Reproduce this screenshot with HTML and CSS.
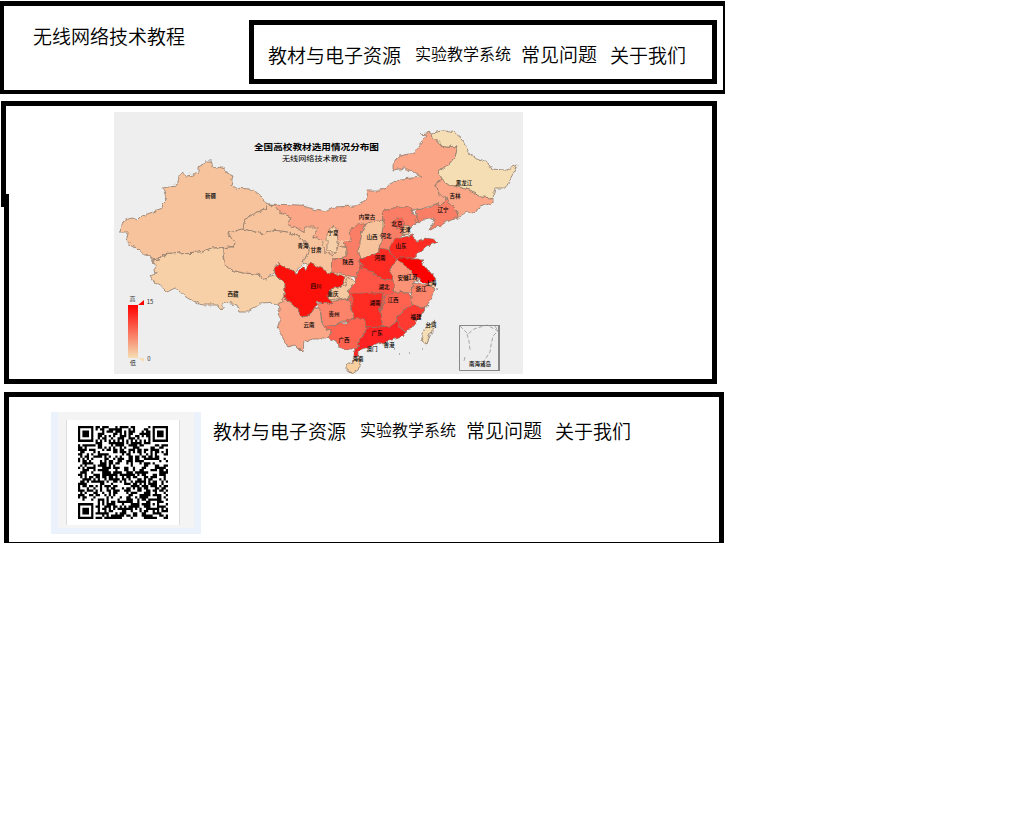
FILE: index.html
```html
<!DOCTYPE html>
<html lang="zh-CN">
<head>
<meta charset="utf-8">
<title>无线网络技术教程</title>
<link rel="stylesheet" href="styles.css">
</head>
<body>
<header class="header">
  <h1 class="brand">无线网络技术教程</h1>
  <nav class="links nav">
    <a class="link resources">教材与电子资源</a>
    <a class="link lab">实验教学系统</a>
    <a class="link faq">常见问题</a>
    <a class="link about">关于我们</a>
  </nav>
</header>
<main class="map-panel">
  <div class="left-edge"></div>
  <svg class="map" viewBox="114 112 409 262" width="409" height="262">
    <defs>
      <filter id="coast" x="-5%" y="-5%" width="110%" height="110%" color-interpolation-filters="sRGB">
        <feTurbulence type="fractalNoise" baseFrequency=".16" numOctaves="2" seed="4" result="n"/>
        <feDisplacementMap in="SourceGraphic" in2="n" scale="6" xChannelSelector="R" yChannelSelector="G"/>
      </filter>
      <linearGradient id="scale" x2="0" y2="1"><stop stop-color="#f00"/><stop offset="1" stop-color="#f5deb3"/></linearGradient>
    </defs>
    <rect x="114" y="112" width="409" height="262" fill="#eee"/>
    <g class="provinces" filter="url(#coast)">
      <path fill="#fba687" d="M267 204 300 205 313 209 323 212 333 207 355 206 367 198 365 190 380 190 400 179 422 177 415 173 405 168 393 170 393 165 399 156 415 153 417 147 427 135 422 134 432 132 433 137 440 145 458 147 455 157 450 163 438 172 443 180 435 183 437 192 443 195 447 202 417 210 412 212 408 207 387 210 382 213 383 220 365 225 350 228 347 240 337 243 322 240 280 230Z"/>
      <g stroke="none"><path fill="#fba687" d="M300 215 360 215 355 238 335 248 312 243Z"/><path fill="#f7c39c" d="M313 243 333 240 347 240 352 262 352 300 330 303 305 265Z"/><path fill="#ff5546" d="M350 285 405 285 400 325 368 330 345 325 345 300Z"/></g>
      <path fill="#f7c39c" d="M119 227 122 222 132 218 137 221 142 216 150 213 162 209 163 203 166 200 164 192 162 188 177 186 177 180 181 173 185 176 193 175 198 173 198 167 205 164 206 161 211 161 213 166 225 169 227 173 233 176 231 185 235 188 250 189 260 194 267 204 265 210 257 212 245 219 243 229 228 233 234 242 232 247 212 248 200 252 180 253 163 255 160 260 153 261 149 255 140 252 135 247 126 242 128 232 121 232Z"/>
      <path fill="#f7d0a8" d="M153 261 160 260 163 255 180 253 200 252 212 248 223 248 223 257 224 263 232 270 243 273 257 274 265 279 278 274 285 280 285 298 280 303 260 304 248 312 240 312 237 305 225 303 220 309 218 305 203 305 190 300 175 288 169 291 155 283 151 275 156 273Z"/>
      <path fill="#f7c39c" d="M267 204 275 205 280 213 292 217 288 223 303 232 305 227 318 227 313 237 322 240 325 252 333 255 340 245 347 248 347 257 333 258 332 272 322 275 315 266 303 263 308 252 307 245 300 237 287 232 272 230 263 234 243 229 245 219 257 212 265 210Z"/>
      <path fill="#f7c39c" d="M228 233 243 229 263 234 272 230 287 232 300 237 307 245 308 252 303 263 295 272 287 270 280 264 275 265 276 272 265 279 257 274 243 273 232 270 224 263 223 248 232 247 234 242Z"/>
      <path fill="#f5deb3" d="M432 132 442 130 455 133 463 140 470 155 488 162 493 170 503 171 518 165 505 188 495 188 493 198 480 197 470 190 450 185 443 180 438 172 450 163 455 157 458 147 440 145 433 137Z"/>
      <path fill="#fba687" d="M443 180 450 185 470 190 480 197 493 198 493 202 477 207 475 213 467 212 458 217 455 207 447 200 437 192 435 183Z"/>
      <path fill="#fa7d66" d="M447 200 455 207 458 217 447 222 428 231 435 220 427 217 420 223 415 220 417 210 430 208ZM383 220 382 213 387 210 408 207 412 212 420 221 412 227 403 235 392 245 390 250 380 250 382 233ZM365 223 350 228 351 240 343 243 347 248 347 257 333 258 332 272 355 277 365 268 358 255 362 233Z"/>
      <path fill="#ff6350" d="M392 222 399 217 405 222 402 229 393 227Z"/>
      <path fill="#f7c39c" d="M365 223 383 220 383 227 380 248 378 253 360 260 358 253 362 233ZM403 225 408 227 410 233 403 234ZM430 281 436 284 433 287 428 285Z"/>
      <path fill="#f5d0a8" d="M327 233 333 226 337 231 338 242 335 253 327 250Z"/>
      <path fill="#ff2c24" d="M390 248 393 240 412 235 417 242 425 239 438 241 425 248 412 258 398 260 392 255ZM360 260 378 253 380 248 390 250 392 255 398 260 390 268 393 280 383 279 362 270Z"/>
      <path fill="#f00" d="M398 258 412 258 420 258 430 272 436 279 428 285 418 280 410 270 400 263Z"/>
      <path fill="#fc9377" d="M398 260 410 270 418 280 413 283 412 293 395 292 392 280 390 268Z"/>
      <path fill="#fb846a" d="M413 283 428 285 435 288 432 298 425 308 413 305 408 297 412 293Z"/>
      <path fill="#ff3a30" d="M413 305 425 308 423 314 412 328 405 332 395 323 398 315Z"/>
      <path fill="#ff5546" d="M355 277 362 268 383 279 393 280 395 292 385 297 352 293 345 290 355 283Z"/>
      <path fill="#ff6350" d="M385 296 395 292 408 293 413 305 398 315 395 323 390 328 383 327 380 313Z"/>
      <path fill="#ff2c24" d="M352 293 383 293 380 313 383 327 367 328 363 320 353 320 352 310Z"/>
      <path fill="#ff2222" d="M367 328 390 326 395 323 405 332 402 337 385 342 368 347 359 350 359 357 354 357 355 349 360 340Z"/>
      <path fill="#ff6350" d="M323 327 350 322 358 317 364 320 368 328 360 340 355 349 347 349 338 347 337 342 328 337 332 332Z"/>
      <path fill="#fb846a" d="M320 310 317 304 332 302 348 298 352 308 354 318 338 324 323 327Z"/>
      <path fill="#fba687" d="M285 298 295 307 303 317 310 315 315 307 320 310 322 326 332 332 325 339 312 339 303 342 302 352 295 345 287 347 283 337 277 328 280 318 278 303Z"/>
      <path fill="#f7c9a0" d="M328 290 345 285 348 277 357 283 347 291 350 298 337 300 328 299Z"/>
      <path fill="#ff110b" d="M274 268 280 263 290 271 297 273 302 267 306 271 310 263 320 268 330 273 345 277 342 286 328 290 328 298 333 305 318 302 310 315 303 317 295 307 285 298 285 283 275 273Z"/>
      <path fill="#f8cf9f" d="M347 365 355 359 361 361 358 369 352 373 347 370Z"/>
      <path fill="#f5deb3" d="M434 322 432 330 427 345 421 340 425 328Z"/>
    </g>
    <path d="M394 349h1m4 5h1m22-5h1m13-60h2m-36-56h1m7 120h-1" stroke="#777"/>
    <g class="labels">
      <text x="210.5" y="198">新疆</text><text x="233" y="295.500">西藏</text>
      <text x="303" y="248">青海</text><text x="316" y="251.500">甘肃</text><text x="333" y="235">宁夏</text>
      <text x="367" y="219">内蒙古</text><text x="348" y="264">陕西</text><text x="372" y="239">山西</text>
      <text x="386" y="238">河北</text><text x="397" y="226">北京</text><text x="405" y="232">天津</text>
      <text x="443" y="212">辽宁</text><text x="455" y="198">吉林</text><text x="464" y="185">黑龙江</text>
      <text x="401" y="248">山东</text><text x="380" y="260">河南</text><text x="403" y="280">安徽</text>
      <text x="412" y="279">江苏</text><text x="431" y="285">上海</text><text x="421" y="291">浙江</text>
      <text x="384" y="289">湖北</text><text x="375" y="305">湖南</text><text x="393" y="302">江西</text>
      <text x="416" y="319">福建</text><text x="377" y="335">广东</text><text x="344" y="342">广西</text>
      <text x="334" y="316">贵州</text><text x="309" y="327">云南</text><text x="316" y="288">四川</text>
      <text x="333" y="296">重庆</text><text x="358" y="361">海南</text><text x="372" y="351">澳门</text>
      <text x="389" y="347">香港</text><text x="431" y="327">台湾</text><text x="480" y="366">南海诸岛</text>
    </g>
    <text class="map-title" x="316.500" y="149.500" textLength="125" lengthAdjust="spacingAndGlyphs">全国高校教材选用情况分布图</text>
    <text class="map-subtitle" x="314.500" y="160.500" textLength="65" lengthAdjust="spacingAndGlyphs">无线网络技术教程</text>
    <rect x="128" y="305" width="10" height="53" fill="url(#scale)"/>
    <path d="M138 305 144 300V305Z" fill="#f00"/><path d="M138 358H144V362Z" fill="#f5deb3"/>
    <g class="scale-text"><text x="132.500" y="301">高</text><text x="133" y="365">低</text><text x="150" y="304">15</text><text x="149" y="361">0</text></g>
    <g fill="none" stroke="#888">
      <path d="M459.500 325.500H499V370.500H459.500Z"/><path d="M499 325V371" stroke-width="2"/>
      <path stroke-width=".7" stroke-dasharray="4 2" d="M460 326 468 334 474 329 487 325 498 331 493 336 491 345 490 352 484 361M467 334 469 341 470 350M465 357 464 361M495 326 498 331"/>
    </g>
  </svg>
</main>
<footer class="footer">
  <div class="qr-frame"><div class="qr-mat"><div class="qr-card">
    <svg class="qr" viewBox="0 0 41 41" width="90" height="93" preserveAspectRatio="none"><path id="qr-modules"/></svg>
  </div></div></div>
  <nav class="links footer-links">
    <a class="link resources">教材与电子资源</a>
    <a class="link lab">实验教学系统</a>
    <a class="link faq">常见问题</a>
    <a class="link about">关于我们</a>
  </nav>
</footer>
<script src="qr.js"></script>
</body>
</html>
```

FILE: styles.css
```css
* { box-sizing: border-box; }
body {
  margin: 0;
  padding-top: 1px;
  background: #fff;
  color: #000;
  font-family: "Noto Sans CJK SC", sans-serif;
}
.header {
  display: flex;
  align-items: flex-start;
  width: 725px;
  height: 93px;
  border: solid #000;
  border-width: 5px 2px 4px 4px;
}
.brand {
  width: 216px;
  margin: 0 0 0 29px;
  padding-top: 20px;
  font-size: 19px;
  font-weight: 350;
  line-height: 20px;
}
.links { display: flex; align-items: flex-start; }
.link { font-size: 19px; font-weight: 350; line-height: 20px; white-space: nowrap; }
.resources { width: 147px; margin-top: 2px; }
.lab { width: 106px; font-size: 16px; }
.faq { width: 89px; margin-top: 1px; }
.about { margin-top: 2px; }
.nav {
  width: 468px;
  height: 64px;
  margin-top: 14px;
  padding: 18px 0 0 14px;
  border: 5px solid #000;
}
.map-panel {
  position: relative;
  width: 716px;
  height: 283px;
  margin: 7px 0 0 1px;
  padding: 6px 0 0 113px;
  border: 5px solid #000;
  border-left: 0;
  clip-path: polygon(0 0, 100% 0, 100% 100%, 3px 100%, 3px 106px, 0 106px);
}
.left-edge {
  position: absolute;
  left: 0;
  top: -5px;
  width: 8px;
  height: 283px;
  background: #000;
  clip-path: polygon(0 0, 5px 0, 5px 93px, 8px 93px, 8px 100%, 3px 100%, 3px 106px, 0 106px);
}
.map { display: block; }
.provinces { stroke: #8e7868; stroke-width: .8; stroke-linejoin: round; }
.labels { font-size: 5.5px; font-weight: 500; text-anchor: middle; }
.map-title { font-size: 8.5px; font-weight: 700; text-anchor: middle; }
.map-subtitle { font-size: 7px; text-anchor: middle; }
.scale-text { font-size: 6px; fill: #333; text-anchor: middle; }
.footer {
  display: flex;
  align-items: flex-start;
  width: 720px;
  height: 151px;
  margin: 8px 0 0 4px;
  padding: 15px 0 0 42px;
  border: 5px solid #000;
  border-bottom-width: 1px;
}
.qr-frame { width: 150px; height: 122px; padding: 0 7px 6px; background: #ecf2fc; }
.qr-mat { height: 116px; padding: 8px 14px 3px 8px; background: #f4f4f4; }
.qr-card { height: 105px; padding: 6px 0 0 11px; border: solid #ddd; border-width: 0 1px; background: #fff; }
.qr { display: block; }
.footer-links { padding: 7px 0 0 12px; }
```

FILE: qr.js
```js
// Fills a 41x41 module grid, with finder, timing and alignment patterns.
const size = 41;
let seed = 20177;
function random() {
  seed = (seed * 1103515245 + 12345) % 2147483648;
  return seed / 2147483648;
}
function ring(x, y, cx, cy) {
  return Math.max(Math.abs(x - cx), Math.abs(y - cy));
}
let d = "";
for (let y = 0; y < size; y++) {
  for (let x = 0; x < size; x++) {
    let on = random() < 0.52;
    if (x === 6 || y === 6) on = (x + y) % 2 === 0;
    const align = ring(x, y, 34, 34);
    if (align <= 2) on = align !== 1;
    for (const [cx, cy] of [[3, 3], [37, 3], [3, 37]]) {
      const r = ring(x, y, cx, cy);
      if (r <= 4) on = r !== 4 && r !== 2;
    }
    if (on) d += `M${x} ${y}h1v1h-1z`;
  }
}
document.getElementById("qr-modules").setAttribute("d", d);
```
